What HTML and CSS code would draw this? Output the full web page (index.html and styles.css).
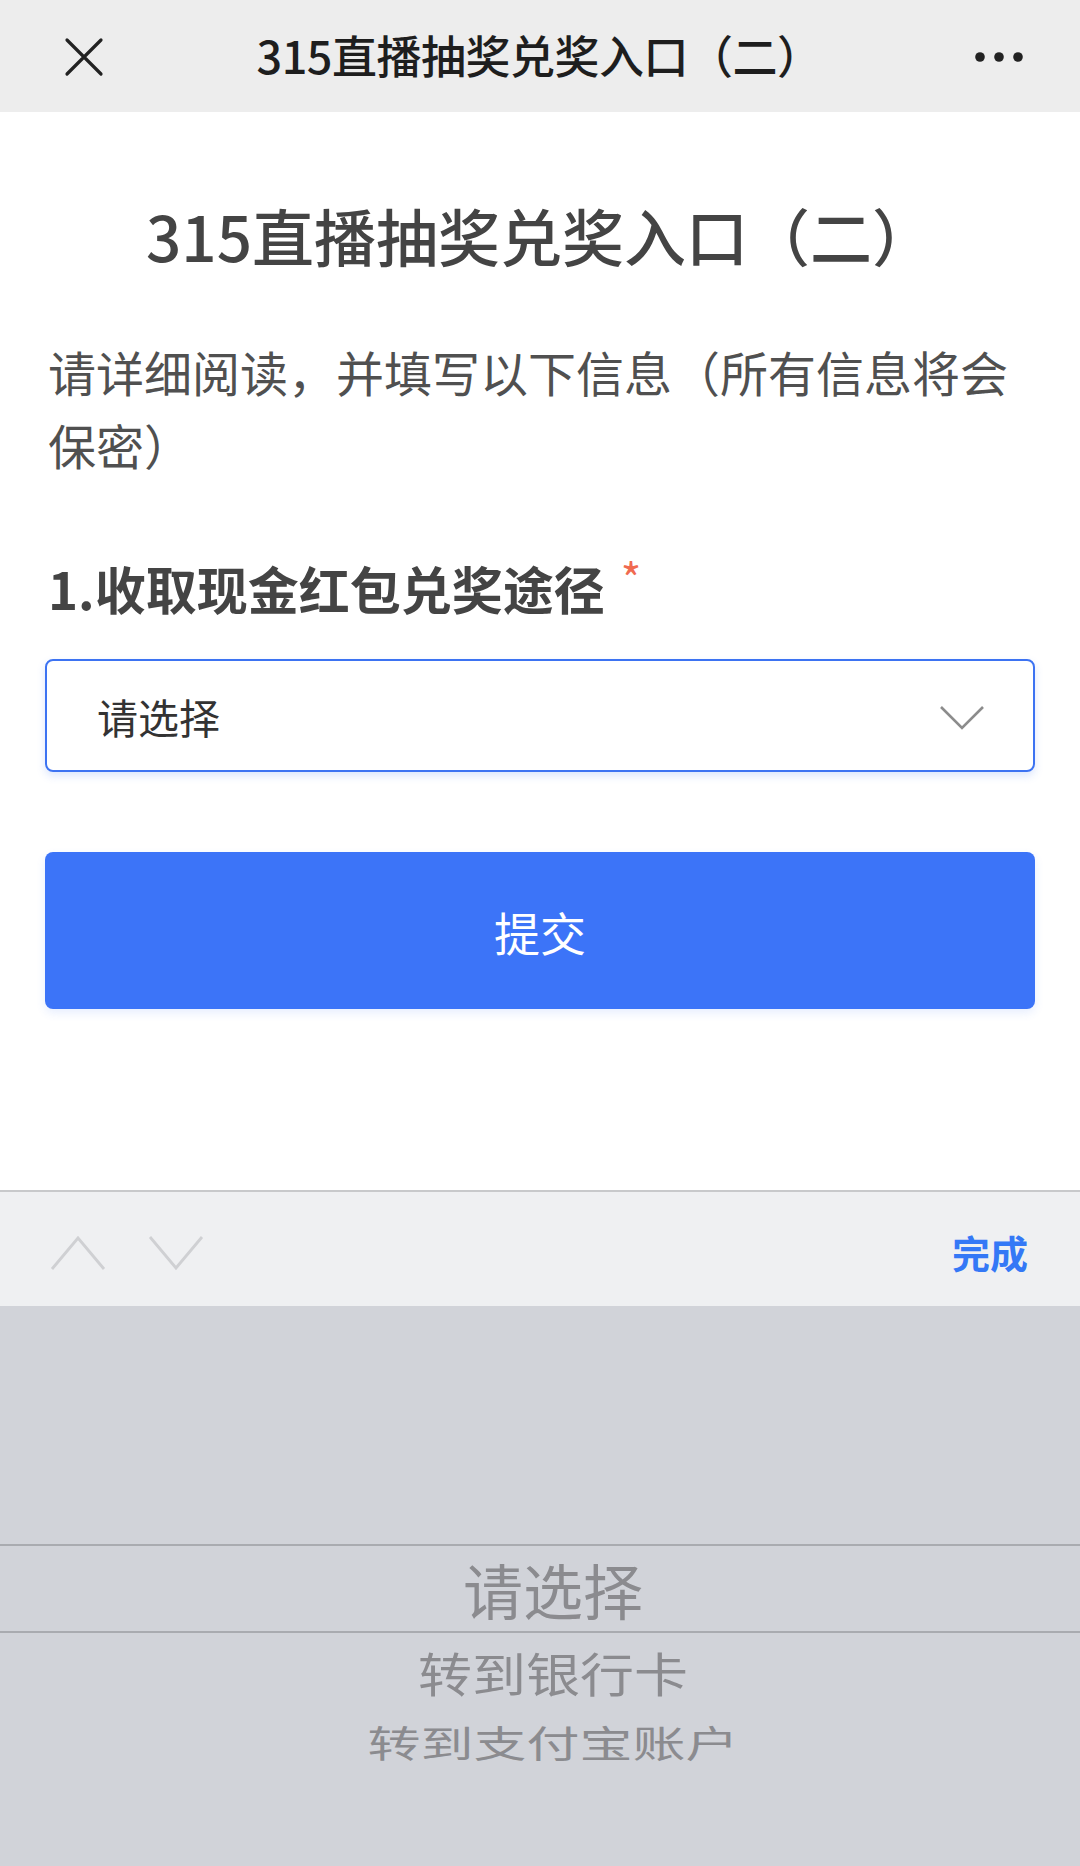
FILE: index.html
```html
<!DOCTYPE html>
<html>
<head>
  <meta charset="utf-8">
  <title>315直播抽奖兑奖入口（二）</title>
  <link rel="stylesheet" href="styles.css">
</head>
<body>

  <div class="navbar">
    <svg class="nav-close" width="40" height="40" viewBox="0 0 40 40">
      <path d="M3 3 L37 37 M37 3 L3 37" stroke="#222" stroke-width="3.2" stroke-linecap="round" fill="none"/>
    </svg>
    <div class="nav-title">315直播抽奖兑奖入口（二）</div>
    <svg class="nav-more" width="50" height="12" viewBox="0 0 50 12">
      <circle cx="6" cy="6" r="4.8" fill="#222"/>
      <circle cx="25" cy="6" r="4.8" fill="#222"/>
      <circle cx="44" cy="6" r="4.8" fill="#222"/>
    </svg>
  </div>

  <div class="page">
    <h1>315直播抽奖兑奖入口（二）</h1>
    <p class="intro">请详细阅读，并填写以下信息（所有信息将会保密）</p>

    <div class="question">1.收取现金红包兑奖途径<span class="required">*</span></div>

    <div class="select">
      <span class="select-text">请选择</span>
      <svg class="select-arrow" width="46" height="26" viewBox="0 0 46 26">
        <path d="M2 2 L23 23 L44 2" stroke="#8c8c8c" stroke-width="2.6" fill="none"/>
      </svg>
    </div>

    <button class="submit">提交</button>
  </div>

  <div class="toolbar">
    <div class="toolbar-arrows">
      <svg width="56" height="36" viewBox="0 0 56 36">
        <path d="M2 34 L28 3 L54 34" stroke="#cfd0d3" stroke-width="2.8" fill="none"/>
      </svg>
      <svg width="56" height="36" viewBox="0 0 56 36">
        <path d="M2 2 L28 33 L54 2" stroke="#cfd0d3" stroke-width="2.8" fill="none"/>
      </svg>
    </div>
    <div class="toolbar-done">完成</div>
  </div>

  <div class="picker">
    <div class="picker-selected">请选择</div>
    <div class="picker-item item-near">转到银行卡</div>
    <div class="picker-item item-far">转到支付宝账户</div>
  </div>

</body>
</html>
```

FILE: styles.css
```css
html, body {
  margin: 0;
  padding: 0;
}

body {
  width: 1080px;
  height: 1866px;
  display: flex;
  flex-direction: column;
  font-family: "Noto Sans CJK SC", "Noto Sans", sans-serif;
  background-color: #fff;
  overflow: hidden;
}

.navbar {
  height: 112px;
  flex-shrink: 0;
  background-color: #ededed;
  display: flex;
  align-items: center;
  justify-content: space-between;
  padding: 0 56px 0 64px;
  box-sizing: border-box;
}

.nav-close {
  margin-top: 2px;
}

.nav-title {
  font-size: 45px;
  color: #1e1e1e;
  font-weight: 500;
  letter-spacing: -0.5px;
  margin-top: -4px;
}

.nav-more {
  margin-top: 2px;
}

.page {
  flex: 1;
  padding: 0 45px;
}

h1 {
  margin: 81px 0 0;
  font-size: 62px;
  line-height: 84px;
  font-weight: 500;
  color: #444;
  text-align: center;
}

.intro {
  margin: 58px 0 0;
  padding: 0 3px;
  font-size: 48px;
  line-height: 73px;
  color: #505050;
}

.question {
  margin-top: 72px;
  padding-left: 3px;
  font-size: 51px;
  line-height: 70px;
  font-weight: 600;
  color: #444;
}

.required {
  display: inline-block;
  vertical-align: top;
  margin-left: 16px;
  margin-top: 2px;
  font-size: 44px;
  line-height: 44px;
  font-weight: 400;
  color: #f06a50;
}

.select {
  margin-top: 36px;
  height: 113px;
  box-sizing: border-box;
  border: 2px solid #3d73f2;
  border-radius: 8px;
  box-shadow: 0 4px 8px rgba(61, 115, 242, 0.18);
  display: flex;
  align-items: center;
  justify-content: space-between;
  padding: 0 48px 0 50px;
}

.select-text {
  font-size: 41px;
  color: #333;
}

.select-arrow {
  margin-top: 4px;
}

.submit {
  display: block;
  width: 100%;
  margin-top: 80px;
  height: 157px;
  border: none;
  border-radius: 8px;
  background-color: #3c74f8;
  color: #fff;
  font-family: inherit;
  font-size: 46px;
  box-shadow: 0 4px 10px rgba(60, 116, 248, 0.12);
}

.toolbar {
  height: 116px;
  flex-shrink: 0;
  box-sizing: border-box;
  border-top: 2px solid #c8c9cb;
  background-color: #eff0f2;
  display: flex;
  align-items: center;
  justify-content: space-between;
  padding: 0 52px 0 50px;
}

.toolbar-arrows {
  display: flex;
  gap: 42px;
  margin-top: 8px;
}

.toolbar-done {
  font-size: 38px;
  font-weight: 700;
  color: #3478f6;
  margin-top: 4px;
}

.picker {
  height: 560px;
  flex-shrink: 0;
  background-color: #d1d3d9;
  padding-top: 238px;
  box-sizing: border-box;
}

.picker-selected {
  height: 89px;
  box-sizing: border-box;
  border-top: 2px solid #a9abb0;
  border-bottom: 2px solid #a9abb0;
  display: flex;
  align-items: center;
  justify-content: center;
  font-size: 60px;
  color: #8b8b8f;
  padding-left: 26px;
}

.picker-item {
  text-align: center;
  color: #8b8b8f;
  padding-left: 26px;
}

.item-near {
  height: 78px;
  line-height: 78px;
  font-size: 54px;
  transform: scaleY(0.86);
}

.item-far {
  height: 62px;
  line-height: 62px;
  font-size: 53px;
  transform: scaleY(0.7);
}
```
